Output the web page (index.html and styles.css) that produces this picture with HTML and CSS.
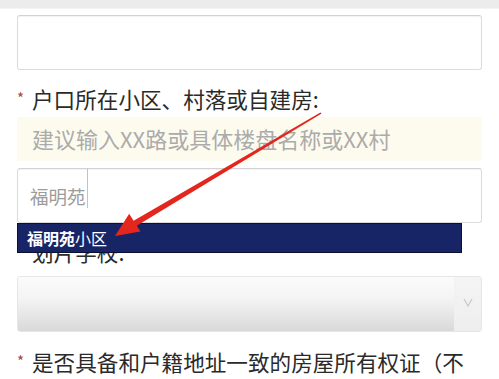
FILE: index.html
```html
<!DOCTYPE html>
<html lang="zh-CN">
<head>
<meta charset="utf-8">
<title>表单</title>
<link rel="stylesheet" href="styles.css">
</head>
<body>
<div class="topbar"></div>
<div class="form">
  <div class="input input-first"></div>
  <div class="label label-first"><span class="req">*</span>户口所在小区、村落或自建房:</div>
  <div class="hint">建议输入XX路或具体楼盘名称或XX村</div>
  <div class="input input-typed">
    <span class="typed">福明苑</span><span class="caret"></span>
    <div class="suggest"><b>福明苑</b>小区</div>
  </div>
  <div class="label label-school">划片学校:</div>
  <div class="select">
    <div class="select-main"></div>
    <div class="select-btn">
      <svg width="10" height="9" viewBox="0 0 10 9"><path d="M1 1 L5 8 L9 1" fill="none" stroke="#c8c8c8" stroke-width="1.2"/></svg>
    </div>
  </div>
  <div class="label label-third"><span class="req">*</span>是否具备和户籍地址一致的房屋所有权证（不</div>
</div>
<svg class="arrow" width="499" height="379" viewBox="0 0 499 379">
  <polygon fill="#e3261e" points="115,236 140.5,231.5 136.8,225.8 321.6,113.6 320.4,112.4 133.6,220.8 129.2,213.8"/>
</svg>
</body>
</html>
```

FILE: styles.css
```css
html, body {
  margin: 0;
  padding: 0;
  background: #ffffff;
}
body {
  position: relative;
  width: 499px;
  height: 379px;
  overflow: hidden;
  font-family: "Noto Sans CJK SC", "Noto Sans", sans-serif;
  color: #2b2b2b;
}
.topbar {
  height: 8px;
  background: #ececec;
  border-bottom: 1px solid #f4f4f4;
}
.form {
  padding: 0 17px;
  display: flex;
  flex-direction: column;
}
.input {
  height: 53px;
  border: 1px solid #dcdcdc;
  border-top-color: #d2d2d2;
  border-radius: 3px;
  background: #fff;
  box-shadow: inset 0 1px 1px rgba(0,0,0,0.05);
}
.input-first {
  margin-top: 6px;
}
.label {
  font-size: 21.6px;
  line-height: 30px;
  height: 30px;
  padding-left: 15px;
  white-space: nowrap;
  color: #2a2a2a;
}
.req {
  display: inline-block;
  width: 15px;
  margin-left: -15px;
  font-size: 15px;
  line-height: 15px;
  vertical-align: top;
  padding-top: 6px;
  color: #a84444;
}
.label-first {
  margin-top: 14px;
}
.hint {
  margin-top: 3px;
  height: 44px;
  line-height: 43px;
  background: #fdfbee;
  padding-left: 15px;
  font-size: 22px;
  color: #ababab;
  white-space: nowrap;
}
.input-typed {
  margin-top: 7px;
  position: relative;
  display: flex;
  align-items: center;
  padding-left: 12px;
}
.typed {
  font-size: 18.5px;
  color: #9c9c9c;
  line-height: 24px;
}
.caret {
  align-self: flex-start;
  width: 1px;
  height: 39px;
  background: #b8c2e6;
  margin-left: 1px;
}
.suggest {
  position: absolute;
  left: -1px;
  top: 54px;
  width: 434px;
  height: 28px;
  border: 1px solid #0b1030;
  background: #172567;
  color: #ffffff;
  font-size: 16px;
  line-height: 28px;
  padding-left: 9px;
  z-index: 2;
}
.suggest b {
  font-weight: 700;
}
.label-school {
  margin-top: 14px;
}
.select {
  margin-top: 9px;
  height: 56px;
  display: flex;
  border: 1px solid #e6e6e6;
  border-radius: 3px;
  overflow: hidden;
  box-sizing: border-box;
}
.select-main {
  flex: 1;
  background: linear-gradient(#fbfbfb 0%, #f4f4f4 40%, #d9d9d9 100%);
}
.select-btn {
  width: 27px;
  background: linear-gradient(#f4f4f4, #eeeeee);
  display: flex;
  align-items: center;
  justify-content: center;
  padding-bottom: 4px;
}
.label-third {
  margin-top: 15px;
}
.arrow {
  position: absolute;
  left: 0;
  top: 0;
  z-index: 5;
  pointer-events: none;
}
```
